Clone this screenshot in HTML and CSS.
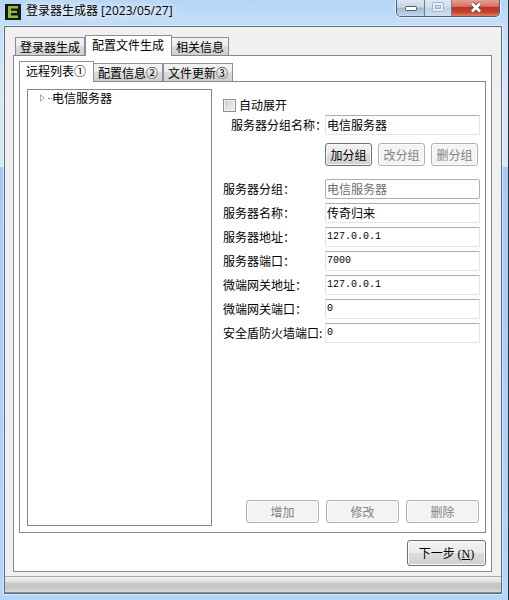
FILE: index.html
```html
<!DOCTYPE html>
<html lang="zh-CN">
<head>
    <meta charset="UTF-8">
    <meta name="viewport" content="width=device-width, initial-scale=1.0">
    <title>登录器生成器</title>
    <link rel="stylesheet" href="styles.css">
</head>
<body>
    <header class="titlebar">
        <svg class="app-icon" width="16" height="16" viewBox="0 0 16 16">
            <rect width="16" height="16" fill="#16180f"/>
            <path d="M3 2h10v2.500H6v2.200h6v2.300H6v2.500h7V14H3z" fill="#8dbb3c"/>
        </svg>
        <h1 class="title">登录器生成器 [2023/05/27]</h1>
        <div class="window-buttons">
            <button type="button" class="win-btn win-min" aria-label="最小化">
                <svg width="14" height="8" viewBox="0 0 14 8"><rect x="1.500" y="3.500" width="11" height="4" rx="1" fill="#fff" stroke="#4e5a68"/></svg>
            </button>
            <button type="button" class="win-btn win-max" aria-label="最大化" disabled>
                <svg width="12" height="10" viewBox="0 0 12 10"><rect x=".5" y=".5" width="11" height="9" rx="1" fill="#e3edf6" stroke="#a3b1c0"/><rect x="3.500" y="3.500" width="5" height="3" fill="#c3d3e2" stroke="#a3b1c0"/></svg>
            </button>
            <button type="button" class="win-btn win-close" aria-label="关闭">
                <svg width="12" height="11" viewBox="0 0 12 11"><path d="M2 1.500l8 8M10 1.500l-8 8" stroke="#6a4850" stroke-width="4.500"/><path d="M2 1.500l8 8M10 1.500l-8 8" stroke="#fff" stroke-width="2.800"/></svg>
            </button>
        </div>
    </header>

    <main class="client">
        <div class="tabs" role="tablist">
            <button type="button" class="tab tab-first" role="tab">登录器生成</button>
            <button type="button" class="tab active" role="tab" aria-selected="true">配置文件生成</button>
            <button type="button" class="tab" role="tab">相关信息</button>
        </div>

        <section class="panel outer-panel">
            <div class="tabs" role="tablist">
                <button type="button" class="tab active" role="tab" aria-selected="true">远程列表①</button>
                <button type="button" class="tab" role="tab">配置信息②</button>
                <button type="button" class="tab" role="tab">文件更新③</button>
            </div>

            <div class="panel inner-panel">
                <ul class="tree">
                    <li class="tree-item">
                        <svg width="5" height="8" viewBox="0 0 5 8"><path d="M.5.8v6.400L4.300 4z" fill="#fff" stroke="#a6a6a6"/></svg>
                        <span class="tree-line"></span>
                        <span>电信服务器</span>
                    </li>
                </ul>

                <form class="form">
                    <label class="check"><input type="checkbox">自动展开</label>
                    <div class="row">
                        <label class="indent" for="groupName">服务器分组名称：</label>
                        <input type="text" id="groupName" value="电信服务器">
                    </div>
                    <div class="group-buttons">
                        <button type="button" class="btn">加分组</button>
                        <button type="button" class="btn" disabled>改分组</button>
                        <button type="button" class="btn" disabled>删分组</button>
                    </div>

                    <div class="fields">
                        <div class="row">
                            <label for="group">服务器分组：</label>
                            <input type="text" id="group" value="电信服务器" disabled>
                        </div>
                        <div class="row">
                            <label for="name">服务器名称：</label>
                            <input type="text" id="name" value="传奇归来">
                        </div>
                        <div class="row">
                            <label for="addr">服务器地址：</label>
                            <input type="text" class="num" id="addr" value="127.0.0.1">
                        </div>
                        <div class="row">
                            <label for="port">服务器端口：</label>
                            <input type="text" class="num" id="port" value="7000">
                        </div>
                        <div class="row">
                            <label for="gateAddr">微端网关地址：</label>
                            <input type="text" class="num" id="gateAddr" value="127.0.0.1">
                        </div>
                        <div class="row">
                            <label for="gatePort">微端网关端口：</label>
                            <input type="text" class="num" id="gatePort" value="0">
                        </div>
                        <div class="row">
                            <label for="firewallPort">安全盾防火墙端口:</label>
                            <input type="text" class="num" id="firewallPort" value="0">
                        </div>
                    </div>

                    <div class="actions">
                        <button type="button" class="btn" disabled>增加</button>
                        <button type="button" class="btn" disabled>修改</button>
                        <button type="button" class="btn" disabled>删除</button>
                    </div>
                </form>
            </div>

            <div class="footer">
                <button type="button" class="btn btn-next">下一步 <span class="hotkey">(<u>N</u>)</span></button>
            </div>
        </section>

        <div class="statusbar"></div>
    </main>
</body>
</html>
```
FILE: styles.css
```css
* {
    margin: 0;
    padding: 0;
    box-sizing: border-box;
}

body,
button,
input {
    font-family: "Noto Sans CJK SC", sans-serif;
    font-size: 12px;
    line-height: 16px;
    color: #000;
}

body {
    display: flex;
    flex-direction: column;
    min-height: 100vh;
    padding: 0 6px 6px 4px;
    border-right: 1px solid #26323e;
    background: linear-gradient(180deg, #b5d5f5 0, #c4def7 26px, #d9e8f7 100px, #d9e8f7 167px, #a5cbf3 167px, #b2d6fb 100%);
}

/* Title bar */
.titlebar {
    display: flex;
    align-items: flex-start;
    height: 26px;
}

.app-icon {
    margin: 4px 5px 0 1px;
}

.title {
    flex: 1;
    padding-top: 3px;
    font-family: "Open Sans", "Noto Sans CJK SC", sans-serif;
    font-size: 12px;
    font-weight: 400;
    text-shadow: 0 0 8px #fff, 0 0 8px #fff;
}

.window-buttons {
    display: flex;
    height: 17px;
    margin-right: 2px;
    border: 1px solid #4d6078;
    border-top: 0;
    border-radius: 0 0 5px 5px;
    overflow: hidden;
    box-shadow: 0 0 1px 1px rgba(255, 255, 255, 0.6);
}

.win-btn {
    display: flex;
    align-items: center;
    justify-content: center;
    width: 27px;
    padding-bottom: 2px;
    border: 0;
    border-right: 1px solid #6d7f95;
    background: linear-gradient(180deg, #dce7f2 0%, #c6d6e6 45%, #a4b9cf 50%, #c3d6ea 100%);
}

.win-min {
    width: 28px;
}

.win-max {
    background: linear-gradient(180deg, #dce9f6 0%, #cfdeed 45%, #bccfe3 50%, #cfe0f0 100%);
}

.win-close {
    width: 47px;
    border-right: 0;
    background: linear-gradient(180deg, #e3a090 0%, #d57463 40%, #bd3525 45%, #c5402b 75%, #df8063 100%);
}

/* Client area */
.client {
    flex: 1;
    display: flex;
    flex-direction: column;
    border: 1px solid #5b6a7c;
    background: #f0f0f0;
    box-shadow: 0 0 0 1px rgba(255, 255, 255, 0.5);
    padding-top: 8px;
}

.client > .tabs,
.outer-panel {
    margin: 0 9px 0 8px;
}

/* Tabs */
.tabs {
    display: flex;
    align-items: flex-end;
    height: 20px;
}

.tab {
    height: 18px;
    padding: 0 4px;
    border: 1px solid #8b8e98;
    border-bottom: 0;
    background: linear-gradient(180deg, #f3f3f3 0%, #ebebeb 50%, #dcdcdc 50%, #cfcfcf 100%);
    white-space: nowrap;
}

.tab-first {
    margin-left: 2px;
}

.tab.active {
    height: 21px;
    padding: 0 7px 2px 6px;
    margin: 0 -1px -1px 0;
    background: #fff;
    z-index: 1;
}

.panel {
    flex: 1;
    border: 1px solid #848791;
    background: #fff;
}

.outer-panel {
    display: flex;
    flex-direction: column;
    padding: 5px;
}

.inner-panel {
    display: grid;
    grid-template-columns: 185px 1fr;
    gap: 11px;
    padding: 7px 5px 6px 7px;
}

/* Server tree */
.tree {
    border: 1px solid #828790;
    list-style: none;
}

.tree-item {
    display: flex;
    align-items: center;
    padding-left: 12px;
}

.tree-line {
    width: 4px;
    margin: 0 0 0 3px;
    border-top: 1px dotted #888;
}

/* Form */
.form {
    display: flex;
    flex-direction: column;
    padding: 8px 0 3px;
}

.check {
    display: flex;
    align-items: center;
    gap: 3px;
    margin-bottom: 2px;
}

.check input {
    appearance: none;
    width: 13px;
    height: 13px;
    border: 1px solid #8e8f8f;
    background: linear-gradient(135deg, #c8ccd2, #f4f4f4);
    box-shadow: inset 0 0 0 1px #f4f4f4;
}

.row {
    display: grid;
    grid-template-columns: 102px 1fr;
    align-items: center;
    white-space: nowrap;
}

.row .indent {
    padding-left: 8px;
}

.row input {
    width: 100%;
    min-width: 0;
    height: 20px;
    padding: 0 1px 2px;
    border: 1px solid #e2e3ea;
    border-top-color: #abadb3;
    border-radius: 1px;
    background: #fff;
}

.row input:disabled {
    border-color: #afafaf;
    border-radius: 2px;
    color: #6d6d6d;
}

.row .num {
    font-family: "Liberation Mono", monospace;
    font-size: 10px;
}

.fields {
    display: grid;
    gap: 4px;
}

.btn {
    height: 23px;
    border: 1px solid #707070;
    border-radius: 3px;
    background: linear-gradient(180deg, #f2f2f2 0%, #ebebeb 50%, #dddddd 50%, #cfcfcf 100%);
    box-shadow: inset 0 0 0 1px #fafafa;
    white-space: nowrap;
}

.btn:disabled {
    border-color: #adb2b5;
    background: #f4f4f4;
    color: #838383;
}

.group-buttons {
    display: flex;
    gap: 6px;
    margin: 8px 0 13px 102px;
}

.group-buttons .btn {
    width: 47px;
}

.actions {
    display: flex;
    justify-content: flex-end;
    gap: 7px;
    margin-top: auto;
    padding-right: 1px;
}

.actions .btn {
    width: 73px;
}

.footer {
    display: flex;
    justify-content: flex-end;
    padding-top: 7px;
}

.btn-next {
    width: 79px;
    height: 26px;
}

.hotkey {
    font-family: "Liberation Serif", serif;
}

.statusbar {
    height: 17px;
    margin-top: 4px;
    border-top: 1px solid #a9a9a9;
    border-bottom: 1px solid #8c8c8c;
    background: linear-gradient(180deg, #f2f2f2 0%, #dedede 35%, #c6c6c6 40%, #c9c9c9 80%, #dadada 100%);
}
```
